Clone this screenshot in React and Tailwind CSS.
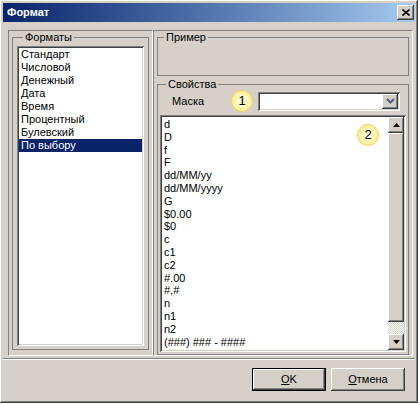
import React from 'react';

const raised =
  'shadow-[inset_-1px_-1px_#404040,inset_1px_1px_#ffffff,inset_-2px_-2px_#808080,inset_2px_2px_#d4d0c8]';
const sunken =
  'shadow-[inset_1px_1px_#808080,inset_-1px_-1px_#ffffff,inset_2px_2px_#404040,inset_-2px_-2px_#d4d0c8]';

const formats = ['Стандарт', 'Числовой', 'Денежный', 'Дата', 'Время', 'Процентный', 'Булевский', 'По выбору'];
const masks = [
  'd', 'D', 'f', 'F', 'dd/MM/yy', 'dd/MM/yyyy', 'G', '$0.00', '$0', 'c', 'c1', 'c2',
  '#.00', '#,#', 'n', 'n1', 'n2', '(###) ### - ####',
];

const Badge = ({ n, className = '' }) => (
  <div
    className={`w-[22px] h-[22px] rounded-full border border-[#f2d46a] bg-[radial-gradient(circle,#fffdf0_0%,#fff3a8_55%,#f9dd72_100%)] flex items-center justify-center text-[13px] text-black ${className}`}
  >
    {n}
  </div>
);

const ScrollButton = ({ down }) => (
  <div className={`w-[16px] h-[16px] bg-[#d4d0c8] ${raised} flex items-center justify-center`}>
    <svg width="7" height="4" viewBox="0 0 7 4">
      {down ? <path d="M0 0h7L3.5 4z" fill="#000" /> : <path d="M0 4h7L3.5 0z" fill="#000" />}
    </svg>
  </div>
);

const App = () => {
  return (
    <div className="w-[420px] h-[405px] bg-white" style={{ fontFamily: '"Liberation Sans", Arial, sans-serif' }}>
      <div
        className={`w-[418px] h-[403px] bg-[#d6d0c8] flex flex-col px-[3px] pt-[3px] ${raised} text-[11px] text-black`}
      >
        {/* Title bar */}
        <div className="h-[19px] bg-gradient-to-r from-[#0a246a] to-[#a6caf0] flex items-center justify-between pl-[4px] pr-[1px]">
          <span className="text-white font-bold text-[11px] leading-none">Формат</span>
          <div className={`w-[17px] h-[15px] bg-[#d4d0c8] ${raised} flex items-center justify-center`}>
            <svg width="8" height="7" viewBox="0 0 8 7">
              <path d="M0.5 0.5L7.5 6.5M7.5 0.5L0.5 6.5" stroke="#000" strokeWidth="1.6" />
            </svg>
          </div>
        </div>

        {/* Panels */}
        <div className="flex mt-[8px] ml-[5px] h-[326px]">
          {/* Left panel */}
          <div className="w-[145px] h-full border border-t-[#808080] border-l-[#808080] border-b-white border-r-white px-[3px] pb-[5px]">
            <fieldset className="h-full border border-[#808080] px-[4px] pb-[3px]">
              <legend className="ml-[6px] px-[2px] leading-[13px]">Форматы</legend>
              <div className={`mt-[2px] h-[300px] bg-white ${sunken} p-[2px]`}>
                {formats.map((f, i) => (
                  <div
                    key={f}
                    className={`h-[13px] leading-[13px] pl-[2px] ${
                      i === formats.length - 1 ? 'bg-[#0a246a] text-white' : ''
                    }`}
                  >
                    {f}
                  </div>
                ))}
              </div>
            </fieldset>
          </div>

          {/* Right panel */}
          <div className="w-[260px] h-full border border-t-[#808080] border-l-[#808080] border-b-white border-r-white px-[3px] flex flex-col">
            <fieldset className="h-[46px] border border-[#808080]">
              <legend className="ml-[6px] px-[2px] leading-[13px]">Пример</legend>
            </fieldset>
            <fieldset className="mt-[2px] flex-1 border border-[#808080] px-[2px] pb-[2px] flex flex-col">
              <legend className="ml-[6px] px-[2px] leading-[13px]">Свойства</legend>
              <div className="h-[20px] flex items-center">
                <span className="ml-[12px] w-[59px]">Маска</span>
                <Badge n="1" />
                <div className={`ml-[5px] w-[142px] h-[19px] bg-white ${sunken} p-[2px] flex justify-end`}>
                  <div className={`w-[16px] h-[15px] bg-[#d4d0c8] ${raised} flex items-center justify-center`}>
                    <svg width="9" height="6" viewBox="0 0 9 6">
                      <path d="M1 1l3.5 3.5L8 1" stroke="#4b5c82" strokeWidth="2" fill="none" />
                    </svg>
                  </div>
                </div>
              </div>
              <div className={`relative mt-[4px] w-[246px] h-[237px] bg-white ${sunken} p-[2px] flex`}>
                <div className="flex-1 overflow-hidden pt-[1px] pl-[2px]">
                  {masks.map((m) => (
                    <div key={m} className="h-[12.8px] leading-[12.8px] whitespace-nowrap">
                      {m}
                    </div>
                  ))}
                </div>
                <div className="w-[16px] flex flex-col">
                  <ScrollButton />
                  <div className={`h-[189px] bg-[#d4d0c8] ${raised}`} />
                  <div className="flex-1 bg-[repeating-conic-gradient(#ffffff_0_25%,#d4d0c8_0_50%)] bg-[length:2px_2px]" />
                  <ScrollButton down />
                </div>
                <Badge n="2" className="absolute left-[197px] top-[9px]" />
              </div>
            </fieldset>
          </div>
        </div>

        {/* Separator */}
        <div className="mt-[2px] h-[2px] border-t border-t-[#808080] border-b border-b-white" />

        {/* Buttons */}
        <div className="flex justify-end gap-[5px] mt-[8px] pr-[10px]">
          <button className="w-[74px] h-[23px] bg-[#d4d0c8] border border-black shadow-[inset_-1px_-1px_#404040,inset_1px_1px_#ffffff,inset_-2px_-2px_#808080] text-[11px]">
            <span className="underline">O</span>K
          </button>
          <button className={`w-[74px] h-[23px] bg-[#d4d0c8] ${raised} text-[11px]`}>
            <span className="underline">О</span>тмена
          </button>
        </div>
      </div>
    </div>
  );
};

export default App;
